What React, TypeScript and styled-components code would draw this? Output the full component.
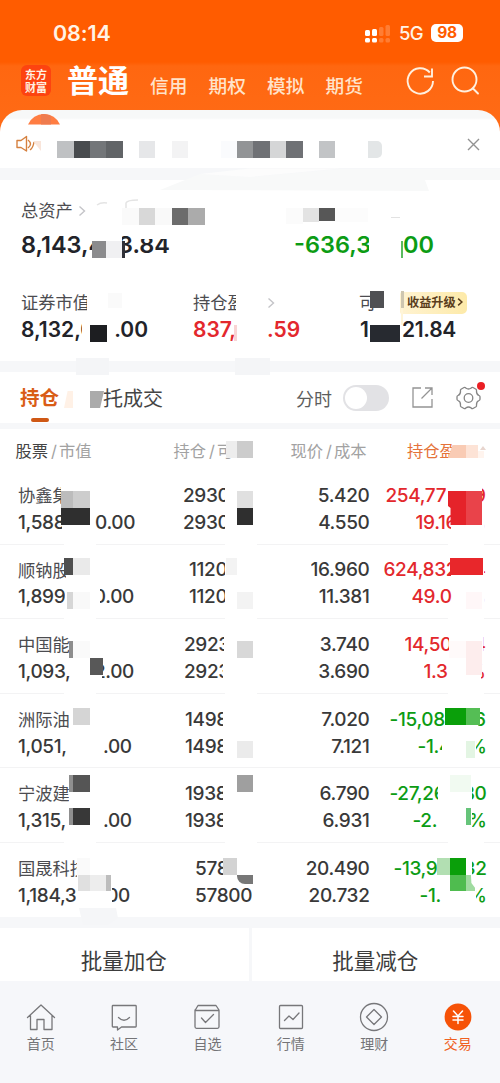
import React from 'react';
import styled, { createGlobalStyle } from 'styled-components';

const GlobalStyle = createGlobalStyle`
  * { box-sizing: border-box; }
  body {
    margin: 0;
    background: #f6f7fa;
    font-family: Inter, "Noto Sans CJK SC", sans-serif;
    color: #333;
  }
`;

const Screen = styled.div`
  position: relative;
  width: 500px;
  height: 1083px;
  overflow: hidden;
  display: flex;
  flex-direction: column;
  background: linear-gradient(#ff5c00 0, #ff5c00 62px, #ff6710 66px, #ff6c18 150px);
`;

const StatusBar = styled.header`
  height: 62px;
  padding: 5px 33px 0 53px;
  display: flex;
  align-items: center;
  color: #fff3e6;
`;

const Clock = styled.span`
  flex: 1;
  margin-top: -1px;
  font-size: 21.5px;
  font-weight: 600;
  letter-spacing: -0.1px;
`;

const Network = styled.span`
  margin: -1px 8px 0 8px;
  font-size: 18.5px;
  font-weight: 500;
  letter-spacing: -0.6px;
`;

const Battery = styled.span`
  width: 32px;
  height: 18px;
  margin: -1px 4px 0 0;
  border-radius: 5px;
  background: #fff;
  color: #ff5c00;
  font-size: 15.5px;
  line-height: 18.5px;
  font-weight: 700;
  letter-spacing: -0.4px;
  text-align: center;
`;

const TopNav = styled.nav`
  height: 48px;
  padding: 0 19px 0 21px;
  display: flex;
  align-items: flex-start;
`;

const Logo = styled.div`
  width: 30px;
  height: 31px;
  margin: 3px 16px 0 0;
  padding-top: 3px;
  display: flex;
  flex-direction: column;
  align-items: center;
  border-radius: 6px;
  background: #fd4310;
  color: #fff1e2;
  font: 700 11px/12.5px "Noto Sans CJK SC", sans-serif;
  span { height: 12.5px; }
`;

const AccountType = styled.h1`
  margin: 0 21px 0 0;
  color: #fff;
  font-size: 31px;
  line-height: 37px;
  font-weight: 600;
`;

const NavLink = styled.span`
  width: 38px;
  margin: 13px 20.5px 0 0;
  color: #ffe3ca;
  font-size: 18.7px;
  line-height: 24px;
  font-weight: 500;
  white-space: nowrap;
`;

const NavIcons = styled.div`
  display: flex;
  gap: 16px;
  margin: 4px 0 0 auto;
`;

const Notice = styled.section`
  height: 58px;
  padding: 10px 20px 0 16px;
  display: flex;
  align-items: center;
  justify-content: space-between;
  border-radius: 22px 22px 0 0;
  background: linear-gradient(#f7f8f8 0, #f7f8f8 8px, #fff 10px);
`;

const Divider = styled.div<{ $h: number }>`
  flex: none;
  height: ${(p) => p.$h}px;
  background: #f6f7f9;
`;

const Assets = styled.section`
  height: 181px;
  padding: 18px 0 0 21px;
  background: #fff;
`;

const Line = styled.div<{ $h?: number; $top?: number }>`
  height: ${(p) => p.$h ?? 27}px;
  margin-top: ${(p) => p.$top ?? 0}px;
  display: flex;
  align-items: center;
`;

const Label = styled.span<{ $left?: number; $w?: number }>`
  margin-left: ${(p) => p.$left ?? 0}px;
  width: ${(p) => (p.$w ? `${p.$w}px` : 'auto')};
  overflow: hidden;
  white-space: nowrap;
  color: #4c4c50;
  font-size: 17.3px;
  line-height: 26px;
`;

const tones = { ink: '#222329', dark: '#393939', red: '#e3282d', green: '#0c9c14' };
type Tone = keyof typeof tones;

const Figure = styled.span<{ $size: number; $tone: Tone; $left?: number; $w?: number; $end?: boolean; $weight?: number; $ls?: number }>`
  flex: none;
  display: flex;
  justify-content: ${(p) => (p.$end ? 'flex-end' : 'flex-start')};
  margin-left: ${(p) => p.$left ?? 0}px;
  width: ${(p) => (p.$w ? `${p.$w}px` : 'auto')};
  overflow: hidden;
  white-space: nowrap;
  color: ${(p) => tones[p.$tone]};
  font-size: ${(p) => p.$size}px;
  line-height: 1.3;
  font-weight: ${(p) => p.$weight ?? 560};
  letter-spacing: ${(p) => p.$ls ?? 0}px;
`;

const UpgradeBadge = styled.span`
  display: flex;
  align-items: center;
  gap: 1px;
  width: 67px;
  height: 22px;
  margin-left: 18px;
  padding: 0 0 2px 7px;
  border-radius: 2px 5px 5px 2px;
  background: linear-gradient(90deg, #fff3d2, #fdeaa9);
  color: #5a3d1c;
  font-size: 12.2px;
  font-weight: 600;
  white-space: nowrap;
`;

const HoldingTabs = styled.section`
  height: 51px;
  padding: 0 19px 0 20px;
  display: flex;
  align-items: center;
  background: #fff;
`;

const ActiveTab = styled.span`
  height: 51px;
  padding-top: 12px;
  display: flex;
  flex-direction: column;
  align-items: center;
  gap: 5px;
  color: #d95c16;
  font-size: 19.5px;
  line-height: 29px;
  font-weight: 600;
  &::after {
    content: '';
    width: 18px;
    height: 4px;
    border-radius: 2px;
    background: #cf5815;
  }
`;

const Tab = styled.span`
  margin-left: 44px;
  color: #454545;
  font-size: 20px;
`;

const ToggleLabel = styled.span`
  margin: 0 11px 0 auto;
  color: #5d5d5d;
  font-size: 18px;
`;

const Toggle = styled.span`
  width: 46px;
  height: 26px;
  margin-right: 23px;
  padding: 2px;
  border-radius: 13px;
  background: #e2e2e5;
  &::after {
    content: '';
    display: block;
    width: 22px;
    height: 22px;
    border-radius: 50%;
    background: #fff;
  }
`;

const Settings = styled.span`
  position: relative;
  display: flex;
  margin-left: 23px;
  &::after {
    content: '';
    position: absolute;
    top: -4px;
    right: -4px;
    width: 8px;
    height: 8px;
    border-radius: 50%;
    background: #ea1f24;
  }
`;

const Table = styled.section`
  height: 488px;
  background: #fff;
`;

const TableHead = styled.div`
  height: 41px;
  display: flex;
  align-items: center;
  padding: 1px 0 0 15.5px;
  color: #a2a2a2;
  font-size: 16.3px;
  white-space: nowrap;
`;

const Heading = styled.span<{ $w: number; $accent?: boolean }>`
  width: ${(p) => p.$w}px;
  color: ${(p) => (p.$accent ? '#e5733a' : 'inherit')};
  b { color: #444; font-weight: 400; }
  i { font-style: normal; padding: 0 2px 0 3px; }
`;

const Row = styled.div`
  height: 74.6px;
  padding: 12.6px 14px 0 18px;
  display: grid;
  grid-template-columns: 165px 70px 116.5px 116.5px;
  border-bottom: 1px solid #f3f3f4;
  &:last-child { border-bottom: 0; }
`;

const Cell = styled.div<{ $right?: boolean }>`
  display: flex;
  flex-direction: column;
  align-items: ${(p) => (p.$right ? 'flex-end' : 'flex-start')};
`;

const Actions = styled.section`
  height: 53px;
  display: grid;
  grid-template-columns: 1fr 1fr;
  gap: 3px;
  background: #f6f7f9;
`;

const Action = styled.button`
  border: 0;
  padding: 13px 1px 0 0;
  background: #fff;
  color: #3c3c3c;
  font: 400 21.5px/40px Inter, "Noto Sans CJK SC", sans-serif;
`;

const TabBar = styled.nav`
  flex: 1;
  display: grid;
  grid-template-columns: repeat(6, 83.4px);
  margin-left: -1px;
  padding-top: 21px;
  background: #f6f7fa;
`;

const TabItem = styled.a<{ $active?: boolean }>`
  display: flex;
  flex-direction: column;
  align-items: center;
  gap: 2px;
  color: ${(p) => (p.$active ? '#f06020' : '#747477')};
  font-size: 14px;
  line-height: 20px;
`;

const Mosaic = styled.div`
  position: absolute;
  inset: 0;
  pointer-events: none;
`;

const Tile = styled.i<{ $x: number; $y: number; $w: number; $h: number; $c: string; $clip?: string }>`
  position: absolute;
  left: ${(p) => p.$x}px;
  top: ${(p) => p.$y}px;
  width: ${(p) => p.$w}px;
  height: ${(p) => p.$h}px;
  background: ${(p) => p.$c};
  clip-path: ${(p) => p.$clip ?? 'none'};
`;

const Smudges = styled.svg`
  position: absolute;
  left: 0;
  top: 0;
`;

type TileData = [number, number, number, number, string, string?];
const H = 17;
const tiles: TileData[] = [
  [57, 141, 16.5, H, '#bfc1c3'], [73.5, 141, 16.5, H, '#484b4e'], [90, 141, 16, H, '#737679'], [106, 141, 17, H, '#616467'],
  [139, 141, 16, H, '#e6e7e9'], [172, 141, 16, H, '#f3f3f4'], [221, 141, 16, H, '#fafbfd'], [237, 141, 16, H, '#929496'],
  [253, 141, 17, H, '#6f7175'], [270, 141, 16, H, '#d5d6d7'], [286, 141, 17, H, '#6f7175'], [319, 141, 16, H, '#c2c4c6'],
  [368, 141, 14, H, '#e3e6e7', 'inset(0 round 0 5px 5px 0)'],
  [33, 141, 8, 10, '#f9e5da', 'polygon(0 0,100% 0,100% 100%)'],

  [122, 208, 17, H, '#fafafa'], [139, 208, 16, H, '#d8d8d8'], [155, 208, 17, H, '#f9f9f9'], [172, 208, 16, H, '#6c6c6c'], [188, 208, 17, H, '#ababab'],
  [286, 208, 17, 16, '#fbfbfb'], [303, 208, 16, 14, '#e3e3e3'], [319, 208, 16, 13, '#575757'], [335, 208, 33, 14, '#fcfcfc'], [391, 217, 9, 1, '#e2e2e2'],
  [92, 241, 14, H, '#8b8b8d'], [106, 241, 16, H, '#f0f0f2'], [122, 241, 3, H, '#303138'], [132, 232, 38, 7, '#fff'],
  [401, 241, 2, H, '#5abb5f'],
  [370, 291, 14, H, '#4f5053'], [401, 291, 3, H, '#cec6b0'], [401, 308, 2, 17, '#fff5d8'],
  [90, 325, 17, H, '#1d1e21'], [370, 325, 30, H, '#272a30'], [234, 325, 3, 16, '#f9d4d4'], [108, 293, 14, 15, '#fafafa'],
  [76, 358, 33, 17, '#f4f5f7'], [235, 358, 35, 17, '#f4f5f7'],

  [64, 391, 9, 17, '#fff1e6', 'polygon(40% 0,100% 0,100% 100%,0 100%)'],
  [90, 391, 14, H, '#ababab', 'polygon(0 0,100% 0,72% 100%,0 100%)'],
  [226, 441, 11, H, '#ededed'], [237, 441, 16, H, '#cccccc'],
  [448, 445, 18, 13, '#f9cbb4', 'polygon(25% 0,100% 0,100% 100%,0 100%)'], [466, 445, 12, 13, '#fde3d6'], [478, 451, 6, 7, '#fff4ee'],
  [480, 446, 6, 4, '#e8d5ce', 'polygon(50% 0,100% 100%,0 100%)'],

  [61, 491, 12, H, '#bcbcbc'], [73, 491, 17, H, '#cdcdcd'], [61, 508, 29, H, '#2f2f2f'], [237, 491, 16, H, '#e0e0e0'], [237, 508, 16, H, '#2f2f2f'],
  [448, 491, 18, 34, '#e5232a', 'polygon(0 0,100% 0,100% 100%,14% 100%,14% 50%,0 44%)'], [466, 491, 16, 34, '#e9434a'],

  [64, 558, 9, H, '#4f4f4f'], [73, 558, 17, H, '#eaeaea'], [226, 558, 11, H, '#f3f3f3'], [450, 558, 33, H, '#e8272b'],
  [67, 592, 6, H, '#d6d6d6'], [73, 592, 17, H, '#f9f9f9'], [237, 592, 16, H, '#f3f3f3'], [466, 592, 16, H, '#fff7f8'],

  [69, 641, 4, H, '#8d8d8d'], [73, 641, 17, H, '#fafafa'], [237, 641, 16, H, '#d8d8d8'], [449, 641, 17, H, '#fffafa'], [466, 641, 16, 34, '#fdeded'], [90, 658, 13, H, '#585858'],

  [73, 708, 17, H, '#d5d5d5'], [445, 708, 21, H, '#0a9f0a'], [466, 708, 14, H, '#55be55'], [237, 741, 16, H, '#ebebeb'], [466, 741, 9, H, '#e3f5e3'],

  [69, 775, 4, H, '#8f8f8f'], [73, 775, 17, H, '#555555'], [237, 775, 16, H, '#9f9f9f'], [450, 775, 21, H, '#f1faf1'],
  [69, 808, 4, H, '#8f8f8f'], [73, 808, 17, H, '#383838'], [466, 808, 5, H, '#66c47a'],

  [77, 858, 13, H, '#fafafa'], [223, 858, 14, H, '#d3d3d3'], [437, 858, 13, H, '#b2dfb2'], [450, 858, 16, H, '#0a9f0a'],
  [78, 875, 12, 16, '#e0e0e0'], [90, 875, 16, 16, '#ededed'], [106, 875, 5, 16, '#bdbdbd'],
  [237, 875, 16, 9, '#777777', 'inset(0 round 0 0 0 8px)'], [450, 875, 16, 16, '#4fbc4f'],
  [466, 875, 9, 16, '#a0dba0', 'polygon(0 0,55% 0,60% 50%,100% 80%,100% 100%,0 100%)'],
  [79, 908, 39, 17, '#f5f6f8', 'polygon(0 0,95% 0,100% 60%,75% 100%,10% 100%)'],
  ...[544, 618, 693, 768, 842].flatMap((y): TileData[] => [[64, y, 32, 2, '#fff'], [225, y, 32, 2, '#fff'], [448, y, 36, 2, '#fff']]),
];

// One visible run of characters: offset in its cell, text, clipped width, anchored to its right edge or not.
type Run = { x: number; t: string; w?: number; end?: boolean };
type Holding = { name: string; nameW: number; value: Run[]; qty: Run[]; price: string; cost: string; pnl: Run[]; pct: Run[]; up: boolean };

const holdings: Holding[] = [
  { name: '协鑫集', nameW: 43, value: [{ x: 0, t: '1,588', w: 44 }, { x: 77, t: '0.00' }], qty: [{ x: 0, t: '2930', w: 42 }, { x: 0, t: '2930', w: 42 }], price: '5.420', cost: '4.550', pnl: [{ x: 16, t: '254,77' }, { x: 112, t: '9', w: 4, end: true }], pct: [{ x: 46, t: '19.16', w: 35 }, { x: 114, t: '%', w: 2, end: true }], up: true },
  { name: '顺钠股', nameW: 48, value: [{ x: 0, t: '1,899' }, { x: 82, t: '0.00', w: 34, end: true }], qty: [{ x: 6, t: '1120', w: 36 }, { x: 6, t: '1120', w: 36 }], price: '16.960', cost: '11.381', pnl: [{ x: 14, t: '624,832', w: 67 }, { x: 114, t: '4', w: 2, end: true }], pct: [{ x: 42, t: '49.0' }, { x: 114, t: '%', w: 2, end: true }], up: true },
  { name: '中国能', nameW: 51, value: [{ x: 0, t: '1,093,' }, { x: 84, t: '2.00', w: 32, end: true }], qty: [{ x: 1, t: '2923', w: 40 }, { x: 1, t: '2923', w: 39 }], price: '3.740', cost: '3.690', pnl: [{ x: 35, t: '14,50', w: 44 }, { x: 113, t: '4', w: 3, end: true }], pct: [{ x: 54, t: '1.3' }, { x: 111, t: '%', w: 5, end: true }], up: true },
  { name: '洲际油', nameW: 51, value: [{ x: 0, t: '1,051,' }, { x: 85, t: '.00' }], qty: [{ x: 2, t: '1498', w: 38 }, { x: 2, t: '1498', w: 38 }], price: '7.020', cost: '7.121', pnl: [{ x: 20, t: '-15,08' }, { x: 108, t: '6', w: 8, end: true }], pct: [{ x: 48, t: '-1.4', w: 24 }, { x: 106, t: '%', w: 11, end: true }], up: false },
  { name: '宁波建', nameW: 51, value: [{ x: 0, t: '1,315,' }, { x: 85, t: '.00' }], qty: [{ x: 2, t: '1938', w: 38 }, { x: 2, t: '1938', w: 38 }], price: '6.790', cost: '6.931', pnl: [{ x: 20, t: '-27,26', w: 48 }, { x: 102, t: '80', w: 15, end: true }], pct: [{ x: 43, t: '-2.' }, { x: 102, t: '%', w: 15, end: true }], up: false },
  { name: '国晟科技', nameW: 59, value: [{ x: 0, t: '1,184,3' }, { x: 94, t: '00', w: 18, end: true }], qty: [{ x: 12, t: '578', w: 30 }, { x: 12, t: '57800' }], price: '20.490', cost: '20.732', pnl: [{ x: 24, t: '-13,9' }, { x: 102, t: '32', w: 15, end: true }], pct: [{ x: 50, t: '-1.' }, { x: 106, t: '%', w: 11, end: true }], up: false },
];

const RunLine = styled.div`
  display: grid;
  height: 27px;
  align-items: center;
  justify-items: start;
  > * { grid-area: 1 / 1; }
`;

const Runs = ({ runs, tone }: { runs: Run[]; tone: Tone }) => (
  <RunLine>
    {runs.map((r) => (
      <Figure key={r.x} $size={19} $weight={540} $ls={-0.35} $tone={tone} $left={r.x} $w={r.w} $end={r.end}>{r.t}</Figure>
    ))}
  </RunLine>
);

const Chevron = ({ c = '#c4c4c8', small }: { c?: string; small?: boolean }) => (
  <svg width={small ? 6 : 8} height={small ? 10 : 12} viewBox="0 0 8 12" fill="none" stroke={c} strokeWidth={small ? 2 : 1.4}>
    <path d="M1.5 1.5 6.5 6l-5 4.5" />
  </svg>
);

const ChevronSlot = styled.span<{ $left: number }>`
  display: flex;
  margin-left: ${(p) => p.$left}px;
`;

const Icon = ({ children }: { children: React.ReactNode }) => (
  <svg width={30} height={30} viewBox="0 0 30 30" fill="none" stroke="#77777a" strokeWidth={1.3} strokeLinejoin="round" strokeLinecap="round">
    {children}
  </svg>
);

const tabs = [
  { label: '首页', icon: <Icon><path d="M1.5 15.5 15 3l13.5 12.5M4.5 13.5V27.500H11V17.500H18V27.500H26V13.500" /></Icon> },
  { label: '社区', icon: <Icon><path d="M4 3.500H26.500a.7.7 0 0 1 .7.7V24.300a.7.7 0 0 1-.7.7H12.500L8.500 28V25H4a.7.7 0 0 1-.7-.7V4.200A.7.7 0 0 1 4 3.500ZM9.500 15.500q5.500 5.500 11 0" /></Icon> },
  { label: '自选', icon: <Icon><path d="M3 8V24.800a1.500 1.500 0 0 0 1.500 1.500H25.500a1.500 1.500 0 0 0 1.500-1.500V8L24 3.500H6L3 8.500H27M9.500 16l4 4.500 8-8" /></Icon> },
  { label: '行情', icon: <Icon><rect x="3.5" y="3.5" width="23" height="23" rx="1" /><path d="m8.500 18.500 4.500-4.500 4 3.500 6-6.500" /></Icon> },
  { label: '理财', icon: <Icon><circle cx="15" cy="15" r="13.5" /><path d="m15 7.500 7.500 7.500-7.500 7.500L7.500 15Z" /></Icon> },
  { label: '交易', active: true, icon: <Icon><circle cx="15" cy="15" r="13.4" fill="#f65207" stroke="none" /><path stroke="#fff" strokeWidth="1.5" d="m10.500 9 4.500 5 4.500-5M10 14.500h10M10 18h10M15 14v7.500" /></Icon> },
];

export default function App() {
  return (
    <>
      <GlobalStyle />
      <Screen>
        <StatusBar>
          <Clock>08:14</Clock>
          <svg width={26} height={18} viewBox="0 0 26 18" fill="#fff">
            <rect x="0" y="5" width="5" height="6" rx="1.5" /><rect x="0" y="13" width="5" height="4.5" rx="1.5" />
            <rect x="7" y="4" width="5" height="7" rx="1.5" /><rect x="7" y="13" width="5" height="4.5" rx="1.5" />
            <g opacity=".2"><rect x="14" y="2" width="4.5" height="9" rx="1.5" /><rect x="14" y="13" width="4.5" height="4.5" rx="1.5" /><rect x="20.5" y="0" width="4.5" height="11" rx="1.5" /><rect x="20.5" y="13" width="4.5" height="4.5" rx="1.5" /></g>
          </svg>
          <Network>5G</Network>
          <Battery>98</Battery>
        </StatusBar>
        <TopNav>
          <Logo><span>东方</span><span>财富</span></Logo>
          <AccountType>普通</AccountType>
          {['信用', '期权', '模拟', '期货'].map((t) => <NavLink key={t}>{t}</NavLink>)}
          <NavIcons>
            <svg width={30} height={30} viewBox="0 0 30 30" fill="none" stroke="#fff0df" strokeWidth={1.9}>
              <path d="M28 15A12.700 12.700 0 1 1 24.800 6.500M27 2.500V10.500H19" />
            </svg>
            <svg width={30} height={30} viewBox="0 0 30 30" fill="none" stroke="#fff0df" strokeWidth={1.9}>
              <circle cx="13.5" cy="13.5" r="12" /><path d="m22 22.500 5 5" strokeLinecap="round" />
            </svg>
          </NavIcons>
        </TopNav>

        <Notice>
          <svg width={19} height={18} viewBox="0 0 19 18" fill="none" stroke="#d5803f" strokeWidth={1.4} strokeLinejoin="round">
            <path d="M1 5.500H5L10.500 1.500V16L5 12.500H1ZM12 5q5 4 0 8M18 7q-1 6-4 8" />
          </svg>
          <svg width={13} height={13} viewBox="0 0 13 13" stroke="#929292" strokeWidth={1.4}><path d="m1 1 11 11M12 1 1 12" /></svg>
        </Notice>
        <Divider $h={12} />

        <Assets>
          <Line $h={26}><Label>总资产</Label><ChevronSlot $left={5}><Chevron /></ChevronSlot></Line>
          <Line $h={32} $top={5}>
            <Figure $size={23.5} $tone="ink" $w={71}>8,143,4</Figure>
            <Figure $size={23.5} $tone="ink" $left={30} $w={48} $end>3.84</Figure>
            <Figure $size={23.5} $tone="green" $left={124} $w={75}>-636,3</Figure>
            <Figure $size={23.5} $tone="green" $left={34}>00</Figure>
          </Line>
          <Line $h={26} $top={29}>
            <Label $w={66}>证券市值</Label>
            <Label $left={106} $w={43}>持仓盈</Label>
            <ChevronSlot $left={31}><Chevron /></ChevronSlot>
            <Label $left={84} $w={23}>可</Label>
            <UpgradeBadge>收益升级<Chevron small c="#5a3d1c" /></UpgradeBadge>
          </Line>
          <Line $h={28}>
            <Figure $size={21} $tone="ink" $w={61}>8,132,0</Figure>
            <Figure $size={21} $tone="ink" $left={31} $w={35} $end>.00</Figure>
            <Figure $size={21} $tone="red" $left={45} $w={43}>837,</Figure>
            <Figure $size={21} $tone="red" $left={31} $w={33}>.59</Figure>
            <Figure $size={21} $tone="ink" $left={60} $w={10}>1</Figure>
            <Figure $size={21} $tone="ink" $left={32} $ls={-0.3}>21.84</Figure>
          </Line>
        </Assets>
        <Divider $h={11} />

        <HoldingTabs>
          <ActiveTab>持仓</ActiveTab>
          <Tab>托成交</Tab>
          <ToggleLabel>分时</ToggleLabel>
          <Toggle />
          <svg width={21} height={21} viewBox="0 0 21 21" fill="none" stroke="#949494" strokeWidth={1.3}>
            <path d="M9 1H1V20H20V12M13 1H20V8M20 1 9.500 11.500" />
          </svg>
          <Settings>
            <svg width={25} height={24} viewBox="0 0 25 24" fill="none" stroke="#858585" strokeWidth={1.3} strokeLinejoin="round">
              <path d="M8 1.500Q9 1 9.800 2q2.700 2 5.400 0Q16 1 17 1.500L20 3.200Q20.800 3.800 20.500 5q-.2 3.500 2.500 4.500 1 .5 1 1.300v2.400q0 .8-1 1.300-2.700 1-2.500 4.500.3 1.200-.5 1.800L17 22.500q-1 .5-1.800-.5-2.700-2-5.400 0-.8 1-1.800.5L5 20.800Q4.200 20.200 4.500 19q.2-3.500-2.500-4.500-1-.5-1-1.300v-2.400Q1 10 2 9.500 4.700 8.500 4.500 5 4.200 3.800 5 3.200Z" />
              <circle cx="12.5" cy="12" r="4.3" />
            </svg>
          </Settings>
        </HoldingTabs>
        <Divider $h={6} />

        <Table>
          <TableHead>
            <Heading $w={158}><b>股票</b><i>/</i>市值</Heading>
            <Heading $w={117}>持仓<i>/</i>可</Heading>
            <Heading $w={116.5}>现价<i>/</i>成本</Heading>
            <Heading $w={60} $accent>持仓盈</Heading>
          </TableHead>
          {holdings.map((h) => (
            <Row key={h.name}>
              <Cell>
                <Line><Label $w={h.nameW}>{h.name}</Label></Line>
                <Runs runs={h.value} tone="dark" />
              </Cell>
              <Cell>
                <Runs runs={[h.qty[0]]} tone="dark" />
                <Runs runs={[h.qty[1]]} tone="dark" />
              </Cell>
              <Cell $right>
                <Runs runs={[{ x: 0, t: h.price }]} tone="dark" />
                <Runs runs={[{ x: 0, t: h.cost }]} tone="dark" />
              </Cell>
              <Cell>
                <Runs runs={h.pnl} tone={h.up ? 'red' : 'green'} />
                <Runs runs={h.pct} tone={h.up ? 'red' : 'green'} />
              </Cell>
            </Row>
          ))}
        </Table>
        <Divider $h={11} />

        <Actions>
          <Action>批量加仓</Action>
          <Action>批量减仓</Action>
        </Actions>

        <TabBar>
          {tabs.map((t) => <TabItem key={t.label} $active={t.active}>{t.icon}{t.label}</TabItem>)}
        </TabBar>

        <Mosaic>
          <Smudges width={500} height={240} fill="none">
            <path d="M28 124.500Q33 114 44 114T60 124.500Z" fill="#ff7d42" />
            <path d="M41 114.300Q46 113.500 51 116V124.500H41Z" fill="#ef7b4e" />
            <path d="M160 190 200 174 250 177 340 169H500V180H425L429 191Z" fill="#f8f9f9" />
            <path d="M200 174 250 168.500H340L250 177Z" fill="#fcfcfc" />
            <path d="M97 205q4-3 10-2M126 208v-5q1-3 12-3" stroke="#e4e4e4" strokeWidth={1.5} />
          </Smudges>
          {tiles.map(([x, y, w, h, c, clip], i) => <Tile key={i} $x={x} $y={y} $w={w} $h={h} $c={c} $clip={clip} />)}
        </Mosaic>
      </Screen>
    </>
  );
}
